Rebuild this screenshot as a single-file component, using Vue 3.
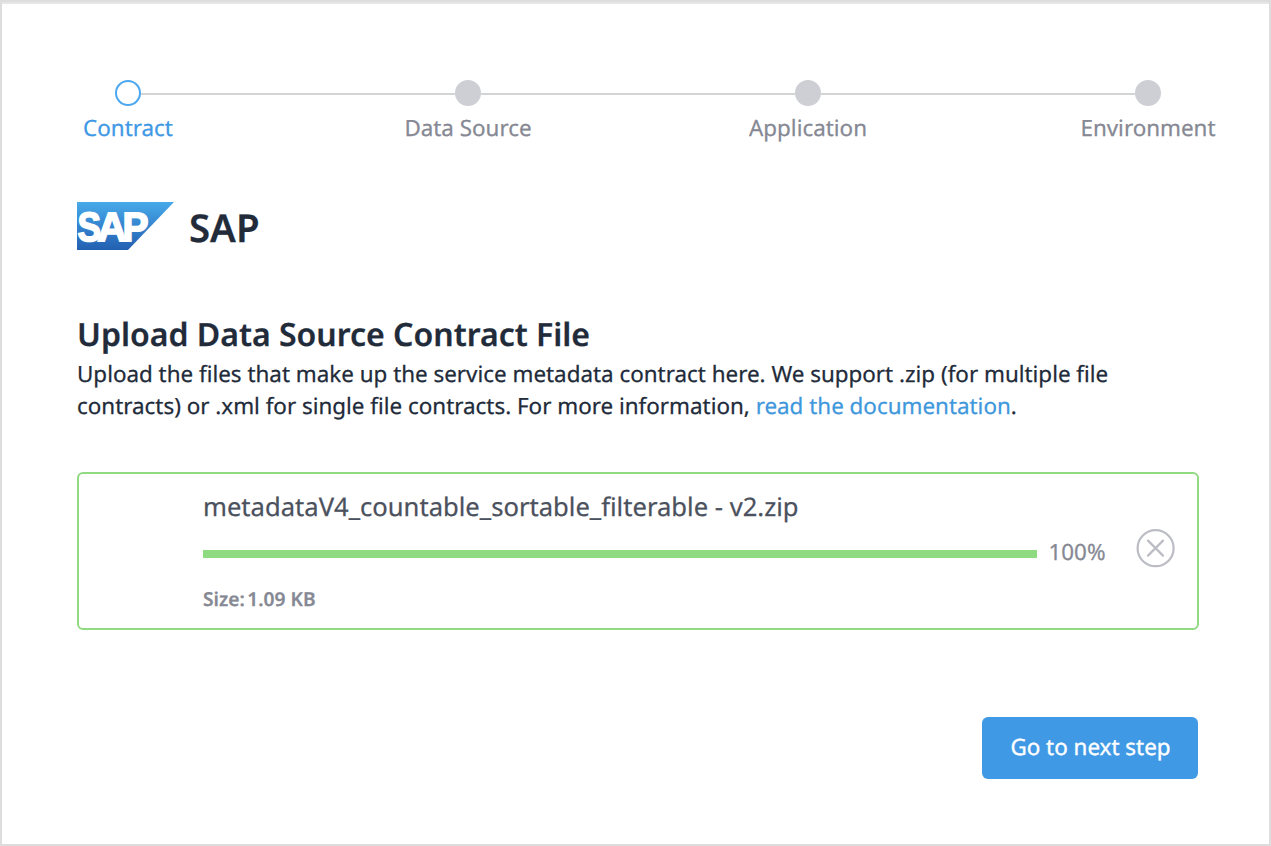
<script setup>
const steps = [
  { label: 'Contract', active: true },
  { label: 'Data Source', active: false },
  { label: 'Application', active: false },
  { label: 'Environment', active: false },
]
const progress = 100
</script>

<template>
  <main class="panel">
    <ol class="steps">
      <li v-for="s in steps" :key="s.label" class="step" :class="{ active: s.active }">
        <div class="rail"><i class="line"></i><span class="dot"></span><i class="line"></i></div>
        <span class="label">{{ s.label }}</span>
      </li>
    </ol>

    <header class="brand">
      <svg class="logo" width="97" height="48" viewBox="0 0 97 48">
        <defs>
          <linearGradient id="brandBlue" x1="0" y1="0" x2="0" y2="1">
            <stop offset="0" stop-color="#48abe9" />
            <stop offset="0.5" stop-color="#3484cf" />
            <stop offset="1" stop-color="#235fb0" />
          </linearGradient>
        </defs>
        <path d="M0 0H97L51 48H0Z" fill="url(#brandBlue)" />
        <g class="logo-text">
          <text x="0.6" y="39" textLength="23.4" lengthAdjust="spacingAndGlyphs">S</text>
          <text x="20.2" y="39" textLength="29.4" lengthAdjust="spacingAndGlyphs">A</text>
          <text x="45.4" y="39" textLength="26" lengthAdjust="spacingAndGlyphs">P</text>
        </g>
      </svg>
      <h1>SAP</h1>
    </header>

    <section class="intro">
      <h2>Upload Data Source Contract File</h2>
      <p>
        Upload the files that make up the service metadata contract here. We support .zip (for multiple file<br />
        contracts) or .xml for single file contracts. For more information, <a>read the documentation</a>.
      </p>
    </section>

    <section class="file">
      <div class="details">
        <div class="name">metadataV4_countable_sortable_filterable - v2.zip</div>
        <div class="progress">
          <div class="track"><div class="bar" :style="{ width: progress + '%' }"></div></div>
          <span class="pct">{{ progress }}%</span>
        </div>
        <div class="size"><span>Size:</span><span>1.09 KB</span></div>
      </div>
      <button class="remove" aria-label="Remove">
        <svg width="40" height="40" viewBox="0 0 40 40" fill="none" stroke="#bcbdc4" stroke-width="2.2" stroke-linecap="round">
          <circle cx="19.6" cy="20.2" r="18" />
          <path d="M12 12.6L27 27.6M27 12.6L12 27.6" />
        </svg>
      </button>
    </section>

    <footer class="actions"><button class="next">Go to next step</button></footer>
  </main>
</template>

<style>
body { background: #fff; }
</style>

<style scoped>
.panel {
  box-sizing: border-box;
  width: 1271px;
  height: 846px;
  border: 2px solid #ddd;
  box-shadow: inset 0 2px #e6e6e6;
  padding-top: 78px;
  overflow: hidden;
  font-family: "Noto Sans", sans-serif;
  color: #222b3a;
  background: #fff;
  text-rendering: geometricPrecision;
  -webkit-text-stroke: 0.25px currentColor;
}
.steps {
  display: grid;
  grid-template-columns: repeat(4, 340px);
  margin: 0 0 0 -44px;
  padding: 0;
  list-style: none;
}
.step { display: flex; flex-direction: column; align-items: center; }
.rail { display: flex; align-items: center; width: 100%; }
.line { flex: 1; height: 2px; margin-top: 1px; background: #d3d4d6; }
.step:first-child .line:first-child,
.step:last-child .line:last-child { background: transparent; }
.dot { box-sizing: border-box; width: 26px; height: 26px; border-radius: 50%; background: #cdcfd4; }
.active .dot { background: #fff; border: 2px solid #4ba7ef; }
.label { font-size: 22.4px; line-height: 30px; margin-top: 7px; color: #868994; }
.active .label { color: #3f98e5; }
.brand { display: flex; gap: 15px; height: 48px; margin: 59px 0 0 75px; }
.logo { flex: none; display: block; overflow: visible; }
.logo-text {
  font: 700 41px/1 "Liberation Sans", Arial, sans-serif;
  fill: #fff;
  stroke: #fff;
  stroke-width: 1.8px;
}
h1 { margin: 0; font-size: 38.4px; font-weight: 600; line-height: 52px; }
.intro { margin: 65px 0 0 75px; }
h2 { margin: 0; font-size: 32px; font-weight: 600; line-height: 40px; white-space: nowrap; }
p { margin: 3px 0 0; font-size: 22.4px; line-height: 32px; white-space: nowrap; }
a { color: #3f98dc; }
.file {
  box-sizing: border-box;
  display: flex;
  width: 1122px;
  height: 158px;
  margin: 50px 0 0 75px;
  padding-left: 124px;
  border: 2px solid #90da82;
  border-radius: 6px;
}
.details { width: 904px; padding-top: 15px; white-space: nowrap; }
.name { font-size: 25.6px; line-height: 36px; color: #4b515d; }
.progress { display: flex; align-items: center; margin-top: 12px; height: 30px; }
.track { width: 834px; height: 8px; margin-top: 4px; }
.bar { height: 100%; background: #90da82; }
.pct { margin-left: 11.5px; font-size: 22.4px; line-height: 30px; color: #868994; }
.size { display: flex; gap: 2.5px; margin-top: 18px; font-size: 19.2px; font-weight: 600; line-height: 28px; color: #868994; }
.remove { display: block; width: 40px; height: 40px; margin: 54px 0 0 29px; padding: 0; border: 0; background: none; }
.remove svg { display: block; }
.actions { display: flex; justify-content: flex-end; margin: 87px 71px 0 0; }
.next {
  width: 216px;
  height: 62px;
  padding: 0 0 2px 1px;
  border: 0;
  border-radius: 6px;
  background: #4099e5;
  color: #fff;
  font: 400 22.4px/30px "Noto Sans", sans-serif;
  text-rendering: geometricPrecision;
  -webkit-text-stroke: 0.35px #fff;
}
</style>
